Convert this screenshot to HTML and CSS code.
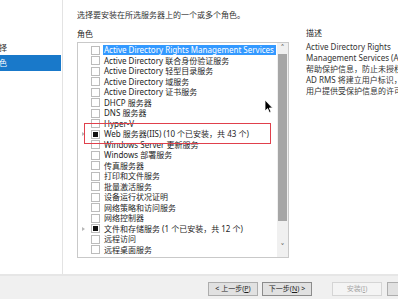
FILE: index.html
```html
<!DOCTYPE html>
<html lang="zh-CN">
<head>
<meta charset="utf-8">
<link rel="stylesheet" href="styles.css">
</head>
<body>
<div class="window">
  <div class="content">
    <nav class="nav">
      <div class="nav-item">服务器选择</div>
      <div class="nav-item active">服务器角色</div>
    </nav>
    <main class="main">
      <p class="intro">选择要安装在所选服务器上的一个或多个角色。</p>
      <div class="columns">
        <section class="roles">
          <h2 class="col-title">角色</h2>
          <div class="listbox">
            <ul class="list">
              <li class="row"><span class="exp"></span><span class="cb"></span><span class="label sel">Active Directory Rights Management Services</span></li>
              <li class="row"><span class="exp"></span><span class="cb"></span><span class="label">Active Directory 联合身份验证服务</span></li>
              <li class="row"><span class="exp"></span><span class="cb"></span><span class="label">Active Directory 轻型目录服务</span></li>
              <li class="row"><span class="exp"></span><span class="cb"></span><span class="label">Active Directory 域服务</span></li>
              <li class="row"><span class="exp"></span><span class="cb"></span><span class="label">Active Directory 证书服务</span></li>
              <li class="row"><span class="exp"></span><span class="cb"></span><span class="label">DHCP 服务器</span></li>
              <li class="row"><span class="exp"></span><span class="cb"></span><span class="label">DNS 服务器</span></li>
              <li class="row"><span class="exp"></span><span class="cb"></span><span class="label">Hyper-V</span></li>
              <li class="row"><span class="exp tri"></span><span class="cb part"></span><span class="label">Web 服务器(IIS) (10 个已安装，共 43 个)</span></li>
              <li class="row"><span class="exp"></span><span class="cb"></span><span class="label">Windows Server 更新服务</span></li>
              <li class="row"><span class="exp"></span><span class="cb"></span><span class="label">Windows 部署服务</span></li>
              <li class="row"><span class="exp"></span><span class="cb"></span><span class="label">传真服务器</span></li>
              <li class="row"><span class="exp"></span><span class="cb"></span><span class="label">打印和文件服务</span></li>
              <li class="row"><span class="exp"></span><span class="cb"></span><span class="label">批量激活服务</span></li>
              <li class="row"><span class="exp"></span><span class="cb"></span><span class="label">设备运行状况证明</span></li>
              <li class="row"><span class="exp"></span><span class="cb"></span><span class="label">网络策略和访问服务</span></li>
              <li class="row"><span class="exp"></span><span class="cb"></span><span class="label">网络控制器</span></li>
              <li class="row"><span class="exp tri"></span><span class="cb part"></span><span class="label">文件和存储服务 (1 个已安装，共 12 个)</span></li>
              <li class="row"><span class="exp"></span><span class="cb"></span><span class="label">远程访问</span></li>
              <li class="row"><span class="exp"></span><span class="cb"></span><span class="label">远程桌面服务</span></li>
            </ul>
            <div class="scrollbar">
              <span class="arrow up">&#x2C4;</span>
              <span class="thumb"></span>
              <span class="arrow down">&#x2C5;</span>
            </div>
            <div class="highlight"></div>
          </div>
        </section>
        <section class="desc">
          <h2 class="col-title">描述</h2>
          <p class="desc-text">Active Directory Rights<br>Management Services (AD RMS)<br>帮助保护信息，防止未授权使用。<br>AD RMS 将建立用户标识，并为授权<br>用户提供受保护信息的许可证。</p>
        </section>
      </div>
    </main>
  </div>
  <footer class="footer">
    <button class="btn">&lt; 上一步(<u>P</u>)</button>
    <button class="btn focus">下一步(<u>N</u>) &gt;</button>
    <button class="btn disabled spaced">安装(<u>I</u>)</button>
    <button class="btn">取消</button>
  </footer>
  <svg class="cursor" width="10" height="15" viewBox="0 0 10 15"><path d="M1 1 L1 12 L3.6 9.6 L5.4 13.6 L7 12.9 L5.3 9 L8.6 9 Z" fill="#000" stroke="#fff" stroke-width="0.8"/></svg>
</div>
</body>
</html>
```

FILE: styles.css
```css
* { box-sizing: border-box; }
html, body { margin: 0; padding: 0; }
body {
  width: 398px;
  height: 299px;
  overflow: hidden;
  background: #fff;
  font-family: "Noto Sans", "Noto Sans CJK SC", sans-serif;
  font-size: 8px;
  color: #1e1e1e;
}
.window {
  position: relative;
  width: 398px;
  height: 299px;
  display: flex;
  flex-direction: column;
}
.content {
  display: flex;
  height: 274px;
}
.nav {
  width: 63px;
  flex: none;
  border-right: 1px solid #e3e3e3;
  padding-top: 40px;
  overflow: hidden;
}
.nav-item {
  height: 15px;
  line-height: 15px;
  font-size: 8px;
  text-indent: -33px;
  white-space: nowrap;
  color: #333;
  margin-right: 1px;
}
.nav-item.active {
  background: #1979ca;
  color: #fff;
  height: 16px;
  line-height: 16px;
}
.main {
  flex: 1;
  padding-left: 14px;
  min-width: 0;
}
.intro {
  margin: 9px 0 0;
  line-height: 11px;
  font-size: 8px;
  color: #333;
}
.columns {
  display: flex;
  gap: 17px;
  margin-top: 8px;
}
.col-title {
  margin: 0;
  font-size: 8px;
  font-weight: normal;
  line-height: 11px;
  height: 14px;
  color: #1e1e1e;
}
.roles { width: 212px; flex: none; }
.listbox {
  position: relative;
  width: 212px;
  height: 216px;
  border: 1px solid #c9c9c9;
  display: flex;
  overflow: hidden;
}
.list {
  list-style: none;
  margin: 0;
  padding: 2px 0 0;
  flex: 1;
  min-width: 0;
  overflow: hidden;
}
.row {
  height: 10.5px;
  display: flex;
  align-items: center;
  white-space: nowrap;
  font-size: 8px;
}
.exp {
  width: 13px;
  flex: none;
  display: flex;
  justify-content: center;
}
.exp.tri::before {
  content: "";
  border-left: 3px solid #b8b8b8;
  border-top: 2.5px solid transparent;
  border-bottom: 2.5px solid transparent;
  margin-left: -3px;
}
.cb {
  width: 9px;
  height: 9px;
  flex: none;
  border: 1px solid #bcbcbc;
  background: #fff;
  margin-right: 4px;
  display: flex;
  align-items: center;
  justify-content: center;
}
.cb.part::before {
  content: "";
  width: 5px;
  height: 5px;
  background: #111;
}
.label {
  line-height: 10px;
  color: #1e1e1e;
}
.label.sel {
  background: #3399ff;
  color: #fff;
  padding: 0 2px 0 1px;
  margin-left: -1px;
}
.scrollbar {
  width: 11px;
  flex: none;
  background: #f0f0f0;
  display: flex;
  flex-direction: column;
  align-items: center;
}
.arrow {
  height: 10px;
  line-height: 10px;
  font-size: 8px;
  color: #606060;
  font-family: "DejaVu Sans", sans-serif;
}
.arrow.up { margin-top: 1px; }
.thumb {
  width: 9px;
  flex: 1;
  background: #a6a6a6;
  margin-bottom: 22px;
}
.arrow.down { margin-bottom: 4px; }
.highlight {
  position: absolute;
  left: 6px;
  top: 80px;
  width: 187px;
  height: 21px;
  border: 1px solid #e0404c;
  pointer-events: none;
}
.desc {
  flex: none;
  width: 120px;
  margin-top: -1px;
}
.desc-text {
  margin: 0;
  line-height: 11px;
  font-size: 8px;
  color: #333;
  white-space: nowrap;
}
.footer {
  height: 25px;
  border-top: 2px solid #e6e6e6;
  background: #f0f0f0;
  display: flex;
  align-items: center;
  padding-left: 208px;
  gap: 4px;
}
.btn {
  width: 50px;
  height: 14px;
  flex: none;
  padding: 0;
  font-family: "Noto Sans", "Noto Sans CJK SC", sans-serif;
  font-size: 7px;
  line-height: 12px;
  color: #1e1e1e;
  background: #e1e1e1;
  border: 1px solid #adadad;
  margin-top: 2px;
}
.btn.focus { border-color: #8c8c8c; }
.btn.disabled {
  background: #f4f4f4;
  border-color: #d5d5d5;
  color: #a8a8a8;
}
.btn.spaced { margin-left: 16px; margin-right: 1px; }
.cursor {
  position: absolute;
  left: 264px;
  top: 99px;
}
```
